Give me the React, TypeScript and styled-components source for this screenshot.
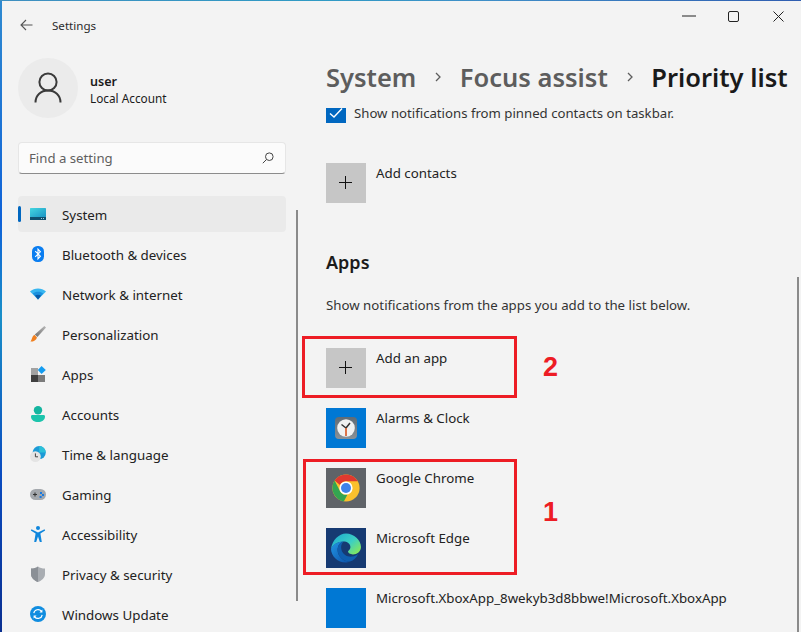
import React from 'react';
import styled, { createGlobalStyle } from 'styled-components';

const GlobalStyle = createGlobalStyle`
  html, body {
    margin: 0;
    padding: 0;
    overflow: hidden;
  }
  * {
    box-sizing: border-box;
  }
`;

const FONT = `'Noto Sans', 'Open Sans', 'Liberation Sans', sans-serif`;

const Desktop = styled.div`
  position: relative;
  width: 801px;
  height: 632px;
  overflow: hidden;
  padding: 1px 0 0 2px;
  font-family: ${FONT};
  background:
    linear-gradient(90deg, #3f8fc0 0%, #2f9ac4 40%, #3f8fc8 60%, #2f5db0 100%) top / 100% 1px no-repeat,
    linear-gradient(180deg, #2f8ad0 0%, #0f62d8 35%, #1a8fc8 50%, #0a4cc0 75%, #0a2f90 100%);
`;

const Window = styled.div`
  display: flex;
  width: 100%;
  height: 100%;
  background: #f3f3f3;
  color: #1b1b1b;
`;

const Sidebar = styled.aside`
  position: relative;
  flex: 0 0 296px;
  padding-left: 16px;
`;

const TitleBar = styled.div`
  display: flex;
  align-items: center;
  height: 48px;
  padding-left: 2px;
  gap: 19px;
  font-size: 11.6px;
  color: #2b2b2b;
`;

const Account = styled.div`
  display: flex;
  align-items: center;
  gap: 12px;
  margin-top: 9px;
`;

const Avatar = styled.div`
  display: flex;
  align-items: center;
  justify-content: center;
  width: 60px;
  height: 60px;
  border-radius: 50%;
  background: #ebebeb;
`;

const AccountText = styled.div`
  display: flex;
  flex-direction: column;
  padding-top: 4px;
`;

const UserName = styled.div`
  font-size: 12.6px;
  font-weight: 600;
  line-height: 18px;
`;

const AccountType = styled.div`
  margin-top: -1px;
  font-size: 11.8px;
  line-height: 17px;
`;

const Search = styled.div`
  display: flex;
  align-items: center;
  justify-content: space-between;
  width: 268px;
  height: 32px;
  margin-top: 24px;
  padding: 0 11px 0 10px;
  background: #fbfbfb;
  border: 1px solid #e6e6e6;
  border-bottom-color: #8c8c8c;
  border-radius: 4px;
  font-size: 13.2px;
  color: #5f5f5f;
`;

const NavList = styled.nav`
  display: flex;
  flex-direction: column;
  gap: 4px;
  margin-top: 22px;
  width: 268px;
`;

const NavRow = styled.div<{ $active?: boolean }>`
  position: relative;
  display: flex;
  align-items: center;
  gap: 16px;
  height: 36px;
  padding-left: 12px;
  border-radius: 4px;
  font-size: 13.35px;
  color: #222;
  background: ${(p) => (p.$active ? '#eaeaea' : 'transparent')};
`;

const NavLabel = styled.span`
  padding-top: 2px;
`;

const Indicator = styled.span`
  position: absolute;
  left: 0;
  top: 10px;
  width: 3px;
  height: 16px;
  border-radius: 2px;
  background: #0067c0;
`;

const ScrollThumb = styled.div<{ $top: number; $height: number; $right: number }>`
  position: absolute;
  right: ${(p) => p.$right}px;
  top: ${(p) => p.$top}px;
  width: 2px;
  height: ${(p) => p.$height}px;
  background: #8a8a8a;
`;

const Main = styled.main`
  position: relative;
  flex: 1;
  min-width: 0;
  display: flex;
  flex-direction: column;
`;

const WindowControls = styled.div`
  display: flex;
  justify-content: flex-end;
  height: 30px;
`;

const ControlButton = styled.div`
  display: flex;
  align-items: center;
  justify-content: center;
  width: 45px;
  height: 30px;
`;

const Breadcrumb = styled.h1`
  display: flex;
  align-items: center;
  height: 36px;
  margin: 28px 0 0 28px;
  font-size: 25.5px;
  font-weight: 600;
  line-height: 36px;
  white-space: nowrap;
  color: #5d5d5d;
`;

const Crumb = styled.span<{ $current?: boolean }>`
  color: ${(p) => (p.$current ? '#1a1a1a' : '#5d5d5d')};
`;

const ChevronSlot = styled.span`
  display: flex;
  justify-content: center;
  width: 43.5px;
`;

const Scroller = styled.div`
  flex: 1;
  min-height: 0;
  margin-top: 13px;
  padding-left: 28px;
  overflow: hidden;
`;

const Content = styled.div`
  margin-top: -5px;
`;

const CheckRow = styled.label`
  display: flex;
  gap: 8px;
  font-size: 13.2px;
  line-height: 20px;
  color: #333;
`;

const CheckBox = styled.span`
  display: flex;
  align-items: center;
  justify-content: center;
  width: 20px;
  height: 20px;
  background: #0067c0;
`;

const TileRow = styled.div<{ $gapTop?: number }>`
  display: flex;
  gap: 10px;
  margin-top: ${(p) => p.$gapTop ?? 20}px;
  font-size: 13.3px;
  line-height: 20px;
  white-space: nowrap;
  color: #222;
`;

const Tile = styled.div<{ $bg: string }>`
  display: flex;
  align-items: center;
  justify-content: center;
  flex: 0 0 40px;
  width: 40px;
  height: 40px;
  background: ${(p) => p.$bg};
`;

const SectionTitle = styled.h2`
  margin: 45px 0 0;
  font-size: 18px;
  font-weight: 600;
  line-height: 28px;
  color: #1b1b1b;
`;

const SectionText = styled.p`
  margin: 19px 0 0;
  font-size: 13.27px;
  line-height: 20px;
  color: #333;
`;

const Callout = styled.div<{ $x: number; $y: number; $w: number; $h: number }>`
  position: absolute;
  left: ${(p) => p.$x}px;
  top: ${(p) => p.$y}px;
  width: ${(p) => p.$w}px;
  height: ${(p) => p.$h}px;
  border: 3px solid #ed1c24;
`;

const CalloutNumber = styled.span<{ $x: number; $y: number }>`
  position: absolute;
  left: ${(p) => p.$x}px;
  top: ${(p) => p.$y}px;
  font-family: 'Liberation Sans', sans-serif;
  font-size: 27px;
  font-weight: 700;
  line-height: 30px;
  color: #ed1c24;
`;

const Glyph = ({ children }: { children: React.ReactNode }) => (
  <svg width="16" height="16" viewBox="0 0 16 16" style={{ flex: '0 0 16px' }}>
    {children}
  </svg>
);

const SystemIcon = () => (
  <Glyph>
    <defs>
      <linearGradient id="sys" x1="0" y1="0" x2="1" y2="1">
        <stop offset="0" stopColor="#45d6e0" />
        <stop offset="1" stopColor="#1a94c4" />
      </linearGradient>
    </defs>
    <rect x="0" y="2" width="16" height="9" rx="0.6" fill="url(#sys)" />
    <rect x="0" y="11" width="16" height="3" fill="#0f4f6e" />
    <rect x="11" y="12" width="1" height="1" fill="#9fd0e0" />
    <rect x="13" y="12" width="1" height="1" fill="#9fd0e0" />
  </Glyph>
);

const BluetoothIcon = () => (
  <Glyph>
    <rect x="2" y="0" width="12" height="16" rx="5.5" fill="#0a7df0" />
    <path d="M5.2 5.2 10.4 10.2 8 12.8V3.2l2.4 2.6L5.2 10.8" fill="none" stroke="#fff" strokeWidth="1.1" />
  </Glyph>
);

const WifiIcon = () => (
  <Glyph>
    <path d="M0 5.6C4.4 1.6 11.6 1.6 16 5.6L8 13.6Z" fill="#38b6f0" />
    <path d="M2.8 7.6C5.8 5.2 10.2 5.2 13.2 7.6L8 13.6Z" fill="#1a90de" />
    <path d="M5 9.6C6.8 8.4 9.2 8.4 11 9.6L8 13.6Z" fill="#0b5aa8" />
  </Glyph>
);

const BrushIcon = () => (
  <Glyph>
    <defs>
      <linearGradient id="brush" x1="0" y1="1" x2="1" y2="0">
        <stop offset="0" stopColor="#6f6f6f" />
        <stop offset="1" stopColor="#b9b9b9" />
      </linearGradient>
    </defs>
    <path d="M14.4 0 16 1.600 7.400 11 4.800 8.400Z" fill="url(#brush)" />
    <path d="M4.400 8.800 7 11.400C6.400 14 3.400 15.800 0.400 15.600 2 14.200 1.800 10.400 4.400 8.800Z" fill="#f08020" />
  </Glyph>
);

const AppsIcon = () => (
  <Glyph>
    <rect x="1" y="2" width="7" height="7" fill="#a2a2a2" />
    <rect x="1" y="9" width="7" height="7" fill="#3f3f3f" />
    <rect x="8" y="9" width="7" height="7" fill="#7b7b7b" />
    <path d="M11.6 0 15.8 4 11.6 8 7.8 4Z" fill="#149cf0" />
  </Glyph>
);

const AccountsIcon = () => (
  <Glyph>
    <circle cx="8" cy="4.2" r="4.2" fill="#14b5a0" />
    <path d="M1 10.4C1 9.6 1.6 9 2.4 9H13.6C14.4 9 15 9.6 15 10.4 15 14 11.6 16 8 16S1 14 1 10.4Z" fill="#1cc4ac" />
  </Glyph>
);

const TimeIcon = () => (
  <Glyph>
    <circle cx="9.2" cy="6.6" r="6.6" fill="#1c9ad6" />
    <path d="M9.2 0A6.6 6.6 0 0 1 15.8 6.6H9.2Z" fill="#2cc0d8" />
    <circle cx="5.4" cy="10.6" r="5.4" fill="#e4e4e4" />
    <path d="M5.4 7.4V10.8H8" fill="none" stroke="#444" strokeWidth="1" />
  </Glyph>
);

const GamingIcon = () => (
  <Glyph>
    <rect x="0" y="3" width="16" height="11" rx="5.5" fill="#a4a8ad" />
    <path d="M3 8.5H7M5 6.5V10.5" stroke="#333" strokeWidth="1.1" />
    <rect x="10" y="6" width="2" height="2" fill="#1a7ae0" />
    <rect x="12" y="8" width="2" height="2" fill="#1a7ae0" />
    <rect x="9.6" y="10" width="2" height="2" fill="#1a7ae0" />
  </Glyph>
);

const AccessibilityIcon = () => (
  <Glyph>
    <circle cx="8" cy="2" r="2" fill="#0f86dc" />
    <path d="M1.5 3.2 8 6.4 14.5 3.2 15.2 4.6 10.4 7.6 11.8 16H9.8L8 10.6 6.2 16H4.2L5.6 7.6 0.8 4.6Z" fill="#0f86dc" />
  </Glyph>
);

const ShieldIcon = () => (
  <Glyph>
    <path d="M8 0.500C10 2 12 2.600 15 2.600V8C15 11.800 11.800 14.600 8 16 4.200 14.600 1 11.800 1 8V2.600C4 2.600 6 2 8 0.500Z" fill="#a9adb2" />
    <path d="M8 0.500V16C4.200 14.600 1 11.800 1 8V2.600C4 2.600 6 2 8 0.500Z" fill="#8b9096" />
  </Glyph>
);

const UpdateIcon = () => (
  <Glyph>
    <circle cx="8" cy="8" r="8" fill="#108de0" />
    <path d="M3.8 7.2A4.3 4.3 0 0 1 11.4 5.2M12.2 8.8A4.3 4.3 0 0 1 4.6 10.8" fill="none" stroke="#fff" strokeWidth="1.2" />
    <path d="M12.4 3.4V6.4H9.4Z M3.6 12.6V9.6H6.6Z" fill="#fff" />
  </Glyph>
);

const PlusIcon = () => (
  <svg width="14" height="14" viewBox="0 0 14 14">
    <path d="M6.500 0V13M0 6.500H13" stroke="#111" strokeWidth="1" />
  </svg>
);

const ClockIcon = () => (
  <svg width="24" height="24" viewBox="0 0 24 24">
    <defs>
      <linearGradient id="clockBody" x1="0" y1="0" x2="0" y2="1">
        <stop offset="0" stopColor="#5f6b75" />
        <stop offset="1" stopColor="#8a9197" />
      </linearGradient>
    </defs>
    <rect x="1" y="1" width="22" height="22" rx="4" fill="url(#clockBody)" />
    <circle cx="12" cy="12" r="8.800" fill="#f0f1f1" />
    <path d="M12 12 7.500 8.500M12 12 16 7" stroke="#333" strokeWidth="1.500" />
    <path d="M12 12V20" stroke="#d9541e" strokeWidth="1.600" />
  </svg>
);

// colored sectors of the chrome logo
const ChromeIcon = () => (
  <svg width="28" height="28" viewBox="0 0 28 28">
    <circle cx="14" cy="14" r="13.6" fill="#fbc02d" />
    <path d="M14 0.4A13.6 13.6 0 0 1 25.8 7.2H14A6.8 6.8 0 0 0 7.9 11L2.6 6.6A13.6 13.6 0 0 1 14 0.4Z" fill="#e0392f" />
    <path d="M2.6 6.6 8.2 17.4A6.8 6.8 0 0 0 15.4 20.7L11.8 27.4A13.6 13.6 0 0 1 2.6 6.6Z" fill="#34a551" />
    <circle cx="14" cy="14" r="6.6" fill="#fff" />
    <circle cx="14" cy="14" r="5" fill="#3f83ea" />
  </svg>
);

const EdgeIcon = () => (
  <svg width="32" height="32" viewBox="0 0 32 32">
    <defs>
      <linearGradient id="edgeTop" x1="0" y1="0" x2="1" y2="0.8">
        <stop offset="0" stopColor="#1aa8d0" />
        <stop offset="0.6" stopColor="#3ccfc4" />
        <stop offset="1" stopColor="#84e85c" />
      </linearGradient>
      <linearGradient id="edgeBottom" x1="0" y1="0" x2="1" y2="1">
        <stop offset="0" stopColor="#2296e4" />
        <stop offset="1" stopColor="#0c50a8" />
      </linearGradient>
    </defs>
    <path d="M16 1.500C24 1.500 31 8 31 15 31 19.500 27 22.500 23 22.500 20 22.500 18 20.800 18 19.600 18 18.600 20.400 18 20.400 15 20.400 11.500 17 9.500 13.500 9.500 8 9.500 3 12.600 1 17 2 8.500 8.800 1.500 16 1.500Z" fill="url(#edgeTop)" />
    <path d="M1 17C2.600 12.400 8 9.500 13.500 9.500 9.600 10.600 7.600 14 7.600 18 7.600 24 13 29.600 20 29.600 18.400 30.400 17 30.600 15.600 30.600 8 30.600 1 24 1 17Z" fill="url(#edgeBottom)" />
    <path d="M7.6 18C7.600 14 9.600 10.600 13.500 9.500 11 12 10.800 15 11.400 17.400 12.600 22.400 17 25 22 24.600 24.600 24.400 27 23.400 28.400 21.600 26.400 26 23.600 28.600 20 29.600 13 29.600 7.600 24 7.600 18Z" fill="#0f5fb0" />
  </svg>
);

const navItems = [
  { label: 'System', icon: <SystemIcon />, active: true },
  { label: 'Bluetooth & devices', icon: <BluetoothIcon /> },
  { label: 'Network & internet', icon: <WifiIcon /> },
  { label: 'Personalization', icon: <BrushIcon /> },
  { label: 'Apps', icon: <AppsIcon /> },
  { label: 'Accounts', icon: <AccountsIcon /> },
  { label: 'Time & language', icon: <TimeIcon /> },
  { label: 'Gaming', icon: <GamingIcon /> },
  { label: 'Accessibility', icon: <AccessibilityIcon /> },
  { label: 'Privacy & security', icon: <ShieldIcon /> },
  { label: 'Windows Update', icon: <UpdateIcon /> },
];

const Chevron = () => (
  <ChevronSlot>
    <svg width="8" height="10" viewBox="0 0 8 10">
      <path d="M2 1 6 5 2 9" fill="none" stroke="#5d5d5d" strokeWidth="1.3" />
    </svg>
  </ChevronSlot>
);

export default function App() {
  return (
    <Desktop>
      <GlobalStyle />
      <Window>
        <Sidebar>
          <TitleBar>
            <svg width="13" height="12" viewBox="0 0 13 12">
              <path d="M12.500 6H1.200M6 1 1 6l5 5" fill="none" stroke="#555" strokeWidth="1.100" />
            </svg>
            <span>Settings</span>
          </TitleBar>
          <Account>
            <Avatar>
              <svg width="28" height="32" viewBox="0 0 28 32">
                <circle cx="14" cy="10" r="8.600" fill="none" stroke="#3a3a3a" strokeWidth="2" />
                <path d="M1.500 30.500C1.500 23 7 18.500 14 18.500S26.500 23 26.500 30.500" fill="none" stroke="#3a3a3a" strokeWidth="2" />
              </svg>
            </Avatar>
            <AccountText>
              <UserName>user</UserName>
              <AccountType>Local Account</AccountType>
            </AccountText>
          </Account>
          <Search>
            <span>Find a setting</span>
            <svg width="12" height="12" viewBox="0 0 12 12">
              <circle cx="7.300" cy="4.700" r="3.800" fill="none" stroke="#444" strokeWidth="1" />
              <path d="M4.500 7.500 0.800 11.200" stroke="#444" strokeWidth="1" />
            </svg>
          </Search>
          <NavList>
            {navItems.map((item) => (
              <NavRow key={item.label} $active={item.active}>
                {item.active && <Indicator />}
                {item.icon}
                <NavLabel>{item.label}</NavLabel>
              </NavRow>
            ))}
          </NavList>
          <ScrollThumb $top={209} $height={391} $right={0} />
        </Sidebar>

        <Main>
          <WindowControls>
            <ControlButton>
              <svg width="14" height="2" viewBox="0 0 14 2">
                <path d="M0 1H14" stroke="#222" strokeWidth="1" />
              </svg>
            </ControlButton>
            <ControlButton>
              <svg width="11" height="11" viewBox="0 0 11 11">
                <rect x="0.500" y="0.500" width="10" height="10" rx="1.500" fill="none" stroke="#222" strokeWidth="1" />
              </svg>
            </ControlButton>
            <ControlButton>
              <svg width="11" height="11" viewBox="0 0 11 11">
                <path d="M0.500 0.500 10.500 10.500M10.500 0.500 0.500 10.500" stroke="#222" strokeWidth="1" />
              </svg>
            </ControlButton>
          </WindowControls>

          <Breadcrumb>
            <Crumb>System</Crumb>
            <Chevron />
            <Crumb>Focus assist</Crumb>
            <Chevron />
            <Crumb $current>Priority list</Crumb>
          </Breadcrumb>

          <Scroller>
            <Content>
              <CheckRow>
                <CheckBox>
                  <svg width="14" height="12" viewBox="0 0 14 12">
                    <path d="M1 6.500 5 10 13 1.500" fill="none" stroke="#fff" strokeWidth="1.400" />
                  </svg>
                </CheckBox>
                <span>Show notifications from pinned contacts on taskbar.</span>
              </CheckRow>
              <TileRow $gapTop={40}>
                <Tile $bg="#c6c6c6"><PlusIcon /></Tile>
                <span>Add contacts</span>
              </TileRow>
              <SectionTitle>Apps</SectionTitle>
              <SectionText>Show notifications from the apps you add to the list below.</SectionText>
              <TileRow $gapTop={33}>
                <Tile $bg="#c6c6c6"><PlusIcon /></Tile>
                <span>Add an app</span>
              </TileRow>
              <TileRow>
                <Tile $bg="#0078d4"><ClockIcon /></Tile>
                <span>Alarms &amp; Clock</span>
              </TileRow>
              <TileRow>
                <Tile $bg="#5f6368"><ChromeIcon /></Tile>
                <span>Google Chrome</span>
              </TileRow>
              <TileRow>
                <Tile $bg="#163a72"><EdgeIcon /></Tile>
                <span>Microsoft Edge</span>
              </TileRow>
              <TileRow>
                <Tile $bg="#0078d4" />
                <span>Microsoft.XboxApp_8wekyb3d8bbwe!Microsoft.XboxApp</span>
              </TileRow>
            </Content>
          </Scroller>
          <ScrollThumb $top={276} $height={355} $right={2} />
        </Main>
      </Window>

      <Callout $x={302} $y={336} $w={215} $h={62} />
      <Callout $x={303} $y={459} $w={214} $h={116} />
      <CalloutNumber $x={543} $y={352}>2</CalloutNumber>
      <CalloutNumber $x={543} $y={497}>1</CalloutNumber>
    </Desktop>
  );
}
